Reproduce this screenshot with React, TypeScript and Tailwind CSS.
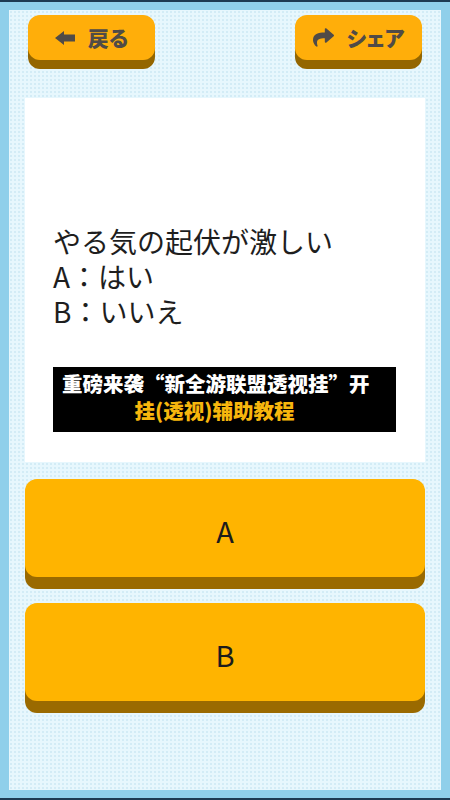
import { FaShare } from "react-icons/fa";

const jp = "font-['Noto_Sans_CJK_JP','Noto_Sans',sans-serif]";

function BackArrow() {
  return (
    <svg width="20" height="14" viewBox="0 0 20 14" className="fill-current">
      <polygon points="0,7 9,0 9,3.5 20,3.5 20,10.5 9,10.5 9,14" />
    </svg>
  );
}

function TopButton({ icon, label }: { icon: React.ReactNode; label: string }) {
  return (
    <button className="flex h-[45px] w-[127px] items-center justify-center gap-[13px] rounded-[12px] bg-[#ffae0a] text-[#504b47] shadow-[0_9px_0_#946600]">
      {icon}
      <span className={`${jp} text-[21px] font-black leading-none [font-feature-settings:'palt']`}>{label}</span>
    </button>
  );
}

function AnswerButton({ label }: { label: string }) {
  return (
    <button className="flex h-[98px] w-full items-center justify-center rounded-[12px] bg-[#ffb400] pt-[6px] shadow-[0_12px_0_#9a6a00]">
      <span className={`${jp} text-[29px] text-[#1c1c1c]`}>{label}</span>
    </button>
  );
}

export default function App() {
  return (
    <div className="flex h-[800px] w-[450px] flex-col border-y-2 border-[#1d3a52] bg-[#8fcfea] px-[9px] pb-[8px] pt-[8px]">
      <div className="flex flex-1 flex-col bg-[#e7f7fd] bg-[image:radial-gradient(#d3ecf6_1px,transparent_1px)] bg-[size:4px_4px] px-[16px] pt-[5px]">
        <div className="flex justify-between px-[3px]">
          <TopButton icon={<BackArrow />} label="戻る" />
          <TopButton icon={<FaShare className="h-[21px] w-[21px]" />} label="シェア" />
        </div>

        <div className="mt-[38px] flex h-[364px] flex-col bg-white px-[28px] pt-[126px]">
          <div className={`${jp} text-[28px] text-[#1e1e1e]`}>
            <div className="h-[35px] leading-[35px]">やる気の起伏が激しい</div>
            <div className="h-[35px] leading-[35px]">A：はい</div>
            <div className="h-[35px] leading-[35px]">B：いいえ</div>
          </div>
          <div className="mt-[38px] flex h-[65px] w-[343px] items-start bg-black pl-[9px] pt-[3px]">
            <div className="w-[305px] text-center font-['Noto_Sans_CJK_SC',sans-serif] text-[20.5px] font-black leading-[27px]">
              <div className="whitespace-nowrap text-white">重磅来袭“新全游联盟透视挂”开</div>
              <div className="text-[#f7b60d]">挂(透视)辅助教程</div>
            </div>
          </div>
        </div>

        <div className="mt-[17px] flex flex-col gap-[26px]">
          <AnswerButton label="A" />
          <AnswerButton label="B" />
        </div>
      </div>
    </div>
  );
}
